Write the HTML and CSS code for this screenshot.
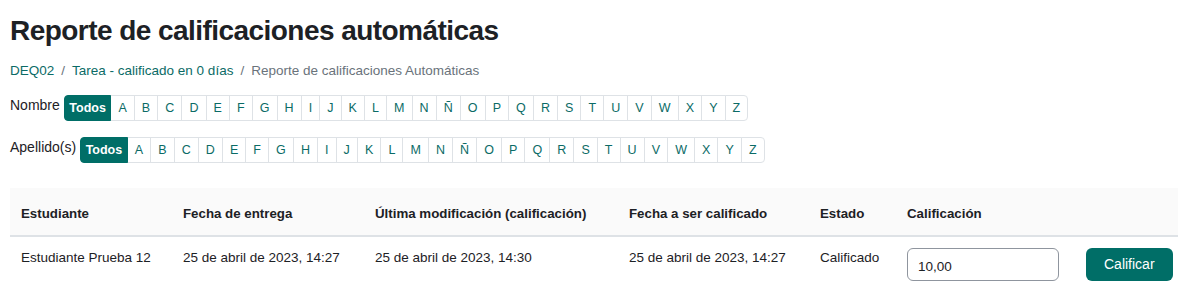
FILE: index.html
```html
<!DOCTYPE html>
<html lang="es">
<head>
<meta charset="utf-8">
<title>Reporte de calificaciones automáticas</title>
<link rel="stylesheet" href="styles.css">
</head>
<body>
<div class="page">
  <h2 class="title">Reporte de calificaciones automáticas</h2>
  <nav class="breadcrumb">
    <a href="#">DEQ02</a><span class="sep">/</span><a href="#">Tarea - calificado en 0 días</a><span class="sep">/</span><span class="current">Reporte de calificaciones Automáticas</span>
  </nav>
  <div class="initials">
    <span class="ilabel">Nombre</span>
    <ul class="pager">
      <li class="active"><a href="#">Todos</a></li>
      <li><a href="#">A</a></li><li><a href="#">B</a></li><li><a href="#">C</a></li><li><a href="#">D</a></li><li><a href="#">E</a></li><li><a href="#">F</a></li><li><a href="#">G</a></li><li><a href="#">H</a></li><li><a href="#">I</a></li><li><a href="#">J</a></li><li><a href="#">K</a></li><li><a href="#">L</a></li><li><a href="#">M</a></li><li><a href="#">N</a></li><li><a href="#">Ñ</a></li><li><a href="#">O</a></li><li><a href="#">P</a></li><li><a href="#">Q</a></li><li><a href="#">R</a></li><li><a href="#">S</a></li><li><a href="#">T</a></li><li><a href="#">U</a></li><li><a href="#">V</a></li><li><a href="#">W</a></li><li><a href="#">X</a></li><li><a href="#">Y</a></li><li><a href="#">Z</a></li>
    </ul>
  </div>
  <div class="initials">
    <span class="ilabel">Apellido(s)</span>
    <ul class="pager">
      <li class="active"><a href="#">Todos</a></li>
      <li><a href="#">A</a></li><li><a href="#">B</a></li><li><a href="#">C</a></li><li><a href="#">D</a></li><li><a href="#">E</a></li><li><a href="#">F</a></li><li><a href="#">G</a></li><li><a href="#">H</a></li><li><a href="#">I</a></li><li><a href="#">J</a></li><li><a href="#">K</a></li><li><a href="#">L</a></li><li><a href="#">M</a></li><li><a href="#">N</a></li><li><a href="#">Ñ</a></li><li><a href="#">O</a></li><li><a href="#">P</a></li><li><a href="#">Q</a></li><li><a href="#">R</a></li><li><a href="#">S</a></li><li><a href="#">T</a></li><li><a href="#">U</a></li><li><a href="#">V</a></li><li><a href="#">W</a></li><li><a href="#">X</a></li><li><a href="#">Y</a></li><li><a href="#">Z</a></li>
    </ul>
  </div>
  <table class="report">
    <colgroup>
      <col class="c0"><col class="c1"><col class="c2"><col class="c3"><col class="c4"><col class="c5"><col class="c6">
    </colgroup>
    <thead>
      <tr>
        <th>Estudiante</th>
        <th>Fecha de entrega</th>
        <th>Última modificación (calificación)</th>
        <th>Fecha a ser calificado</th>
        <th>Estado</th>
        <th>Calificación</th>
        <th></th>
      </tr>
    </thead>
    <tbody>
      <tr>
        <td>Estudiante Prueba 12</td>
        <td>25 de abril de 2023, 14:27</td>
        <td>25 de abril de 2023, 14:30</td>
        <td>25 de abril de 2023, 14:27</td>
        <td>Calificado</td>
        <td><input class="grade" type="text" value="10,00"></td>
        <td><button class="btn" type="button">Calificar</button></td>
      </tr>
    </tbody>
  </table>
</div>
</body>
</html>
```

FILE: styles.css
```css
* { box-sizing: border-box; }
html, body { margin: 0; padding: 0; background: #fff; }
body {
  font-family: "Liberation Sans", Arial, sans-serif;
  color: #1d2125;
  font-size: 14px;
}
.page { padding: 0 0 0 10px; }
.title {
  margin: 0;
  padding-top: 14px;
  font-size: 28px;
  letter-spacing: -0.55px;
  line-height: 34px;
  font-weight: 700;
  color: #1d2125;
}
.breadcrumb {
  margin-top: 14px;
  font-size: 13.5px;
  line-height: 18px;
  display: flex;
  align-items: center;
}
.breadcrumb a { color: #0b6b66; text-decoration: none; }
.breadcrumb .sep { color: #6a737b; padding: 0 7px; }
.breadcrumb .current { color: #6a737b; }
.initials {
  display: flex;
  align-items: flex-start;
}
.breadcrumb + .initials { margin-top: 15px; }
.initials + .initials { margin-top: 16px; }
.ilabel {
  font-size: 14px;
  line-height: 18px;
  margin-right: 4px;
  padding-top: 1px;
}
.pager {
  display: flex;
  list-style: none;
  margin: 0;
  padding: 0;
}
.pager li a {
  display: block;
  height: 26px;
  line-height: 24px;
  padding: 0 7.05px;
  font-size: 12.5px;
  color: #0b6b66;
  text-decoration: none;
  border: 1px solid #dee2e6;
  margin-left: -1px;
  background: #fff;
}
.pager li:first-child a { margin-left: 0; border-radius: 4px 0 0 4px; }
.pager li:last-child a { border-radius: 0 4px 4px 0; }
.pager li.active a {
  background: #006e67;
  border-color: #006e67;
  color: #fff;
  font-weight: 700;
  padding: 0 4.5px;
  position: relative;
  z-index: 1;
}
.report {
  margin-top: 25px;
  width: 1168px;
  table-layout: fixed;
  border-collapse: collapse;
  font-size: 13.5px;
}
.report th {
  background: #fafafa;
  text-align: left;
  font-weight: 700;
  font-size: 13.3px;
  height: 48px;
  padding: 4px 11px 0;
  vertical-align: middle;
  border-bottom: 2px solid #dee2e6;
  white-space: nowrap;
}
.report td {
  padding: 12px 11px 10px;
  vertical-align: top;
  line-height: 18px;
  white-space: nowrap;
}
.report .c0 { width: 162px; }
.report .c1 { width: 192px; }
.report .c2 { width: 254px; }
.report .c3 { width: 191px; }
.report .c4 { width: 87px; }
.report .c5 { width: 179px; }
.report .c6 { width: 103px; }
.grade {
  display: block;
  margin-top: -1px;
  width: 152px;
  height: 33px;
  border: 1px solid #8f959e;
  border-radius: 6px;
  padding: 0 10px;
  font-family: "Liberation Sans", Arial, sans-serif;
  font-size: 13.5px;
  color: #1d2125;
  padding-top: 3px;
}
.btn {
  display: block;
  margin-top: -1px;
  height: 33px;
  padding: 0 18px 2px;
  border: 0;
  border-radius: 6px;
  background: #006e67;
  color: #fff;
  font-family: "Liberation Sans", Arial, sans-serif;
  font-size: 14px;
}
```
